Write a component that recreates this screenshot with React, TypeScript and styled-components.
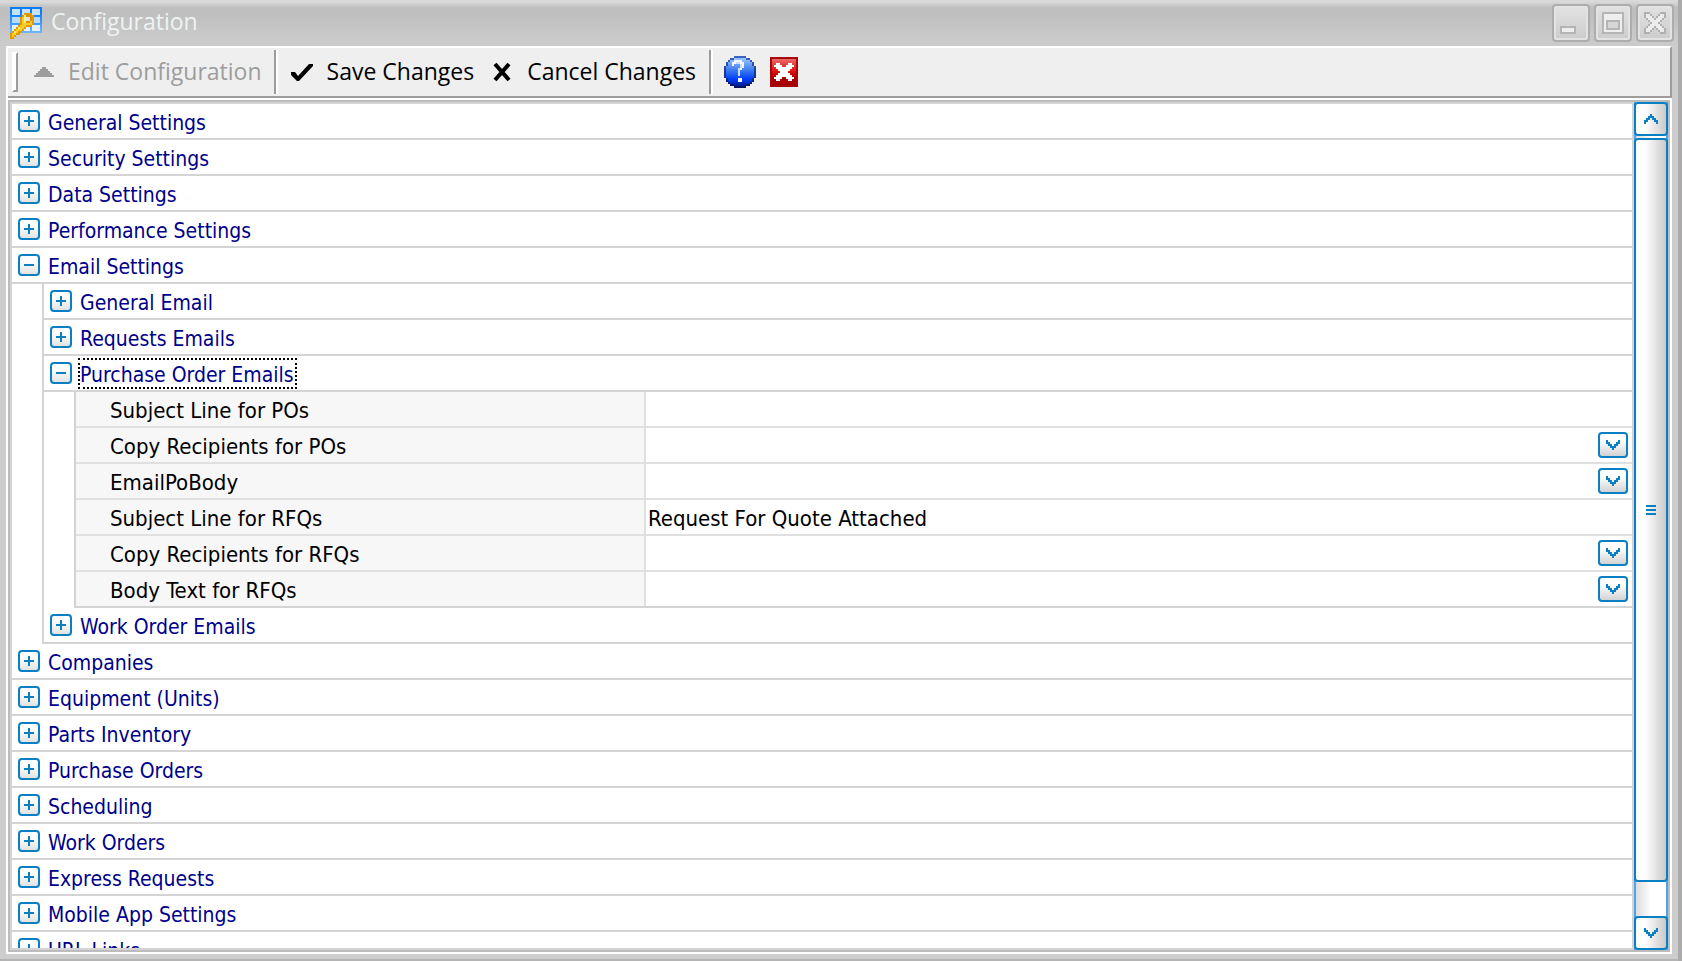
import React, { useState } from "react";
import styled, { createGlobalStyle, css } from "styled-components";

const ACCENT = "#0a7fc1";
const LINE = "#d4d4d4";
const TREE_FONT = `Tahoma, "DejaVu Sans Condensed", sans-serif`;
const UI_FONT = `"Segoe UI", "Open Sans", sans-serif`;

const GlobalStyle = createGlobalStyle`
  * { box-sizing: border-box; }
  body { margin: 0; overflow: hidden; }
  button, input { font: inherit; color: inherit; }
`;

const Window = styled.div`
  display: flex;
  flex-direction: column;
  height: 100vh;
  background: #cdcdcd;
  box-shadow: inset -4px 0 #ababab, inset 0 -2px #b4b4b4;
`;

const TitleBar = styled.header`
  display: flex;
  align-items: center;
  height: 46px;
  padding: 0 8px 0 10px;
  background: linear-gradient(#d9d9d9 0 2px, #cfcfcf 4px, #bfbfbf 8px 16px, #c9c9c9 36px, #cbcbcb);
  box-shadow: inset -4px 0 #ababab;
  font-family: ${UI_FONT};
`;

const Title = styled.h1`
  flex: 1;
  margin: 0;
  padding: 0 0 4px 9px;
  font-size: 23px;
  font-weight: 400;
  line-height: 30px;
  color: #eef3f3;
`;

const WindowButtons = styled.div`
  display: flex;
  gap: 4px;
`;

const WindowButton = styled.button`
  width: 38px;
  height: 38px;
  padding: 0;
  border: 2px solid #adadad;
  border-radius: 4px;
  background: linear-gradient(#e2e2e2, #cccccc);
  box-shadow: inset 0 0 0 2px #e3e3e3;
  svg { display: block; }
`;

const Body = styled.div`
  display: flex;
  flex: 1;
  flex-direction: column;
  min-height: 0;
  margin: 0 10px 7px 6px;
  border-left: 2px solid #fff;
  background: #fff;
`;

const Toolbar = styled.div`
  display: flex;
  align-items: center;
  height: 52px;
  padding: 0 4px;
  border: 2px solid #9d9d9d;
  border-top-color: #fff;
  border-left: 0;
  background: #efefef;
  font-family: ${UI_FONT};
  font-size: 23px;
  line-height: 30px;
`;

const Grip = styled.span`
  width: 6px;
  height: 40px;
  border: 2px solid #9d9d9d;
  border-top-color: #fff;
  border-left-color: #fff;
  background: #fff;
`;

const Separator = styled.span`
  width: 4px;
  height: 44px;
  background: linear-gradient(90deg, #9d9d9d 50%, #fff 50%);
`;

const ToolButton = styled.button<{ $pad?: string }>`
  display: flex;
  align-items: center;
  gap: 14px;
  height: 44px;
  padding: ${(p) => p.$pad ?? "0 13px"};
  border: 0;
  background: none;
  white-space: nowrap;
  color: #000;
  &:disabled { color: #9d9d9d; }
  svg { flex: none; }
`;

const ToolText = styled.span`
  padding-bottom: 2px;
`;

const Panel = styled.main`
  display: flex;
  flex: 1;
  min-height: 0;
  margin: 2px 2px 2px 0;
  border: 2px solid #bcbcbc;
`;

const Tree = styled.ul`
  flex: 1;
  min-width: 0;
  margin: 0;
  padding: 0;
  overflow: hidden;
  border: 2px solid ${LINE};
  list-style: none;
  font-family: ${TREE_FONT};
  font-size: 22px;
  line-height: 28px;
`;

const Branch = styled.ul`
  margin: 0;
  padding: 0 0 0 30px;
  list-style: none;
`;

const Item = styled.li<{ $nested?: boolean }>`
  ${(p) => p.$nested && css`border-left: 2px solid ${LINE};`}
`;

const GroupRow = styled.div`
  display: flex;
  align-items: center;
  gap: 7px;
  height: 36px;
  padding-left: 6px;
  border-bottom: 2px solid ${LINE};
`;

const Toggle = styled.button`
  width: 22px;
  height: 22px;
  padding: 0;
  border: 2px solid ${ACCENT};
  border-radius: 4px;
  background: linear-gradient(#fff 30%, #e2e2e2);
  svg { display: block; }
`;

const GroupLabel = styled.span<{ $focused?: boolean }>`
  padding: 3px 2px 0 1px;
  font-size: 21px;
  line-height: 26px;
  color: #00008b;
  ${(p) => p.$focused && css`outline: 2px dotted #000; outline-offset: -1px;`}
`;

const Properties = styled.div`
  margin-left: 30px;
  border-left: 2px solid ${LINE};
`;

const Property = styled.div<{ $last?: boolean }>`
  display: grid;
  grid-template-columns: minmax(200px, 568px) minmax(0, 1fr);
  height: 36px;
  border-bottom: 2px solid ${(p) => (p.$last ? LINE : "#e0e0e0")};
`;

const PropertyLabel = styled.label`
  padding: 5px 0 1px 34px;
  background: #f7f7f7;
  white-space: nowrap;
  color: #000;
`;

const PropertyValue = styled.div`
  display: flex;
  align-items: center;
  padding-right: 4px;
  border-left: 2px solid #e0e0e0;
`;

const ValueInput = styled.input`
  flex: 1;
  min-width: 0;
  height: 34px;
  padding: 2px 2px 0;
  border: 0;
  outline: 0;
  background: transparent;
`;

const DropButton = styled.button`
  width: 30px;
  height: 26px;
  padding: 0;
  border: 2px solid ${ACCENT};
  border-radius: 4px;
  background: linear-gradient(#fff 30%, #d2d2d2);
  svg { display: block; margin: 0 auto; }
`;

const ScrollBar = styled.div`
  display: flex;
  flex-direction: column;
  width: 34px;
  background: linear-gradient(90deg, #d8d8d8, #fff 50%);
  box-shadow: inset 2px 0 #4fa3ea, inset -2px 0 #4fa3ea;
`;

const scrollPart = css`
  padding: 0;
  border: 2px solid ${ACCENT};
  border-radius: 4px;
  background: linear-gradient(90deg, #fff 30%, #e4e4e4 65%, #c9c9c9);
`;

const ScrollButton = styled.button`
  ${scrollPart}
  height: 34px;
  svg { display: block; margin: 0 auto; }
`;

const ScrollTrack = styled.div`
  flex: 1;
  padding-top: 2px;
`;

const ScrollThumb = styled.div`
  ${scrollPart}
  display: flex;
  align-items: center;
  justify-content: center;
  height: 95.6%;
`;

const Pixels = ({ width, height, children }: { width: number; height: number; children: React.ReactNode }) => (
  <svg width={width} height={height} viewBox={`0 0 ${width / 2} ${height / 2}`} shapeRendering="crispEdges" aria-hidden="true">
    {children}
  </svg>
);

const AppIcon = () => (
  <Pixels width={32} height={32}>
    <defs>
      <linearGradient id="grid" x1="0" y1="0" x2="0" y2="1">
        <stop offset=".2" stopColor="#0a7cf8" />
        <stop offset="1" stopColor="#6fb6ff" />
      </linearGradient>
    </defs>
    <path d="M0 0h16v13H0z" fill="url(#grid)" />
    <path d="M1 1h4v3H1zM6 1h4v3H6zM11 1h4v3h-4z" fill="#c4e2ff" />
    <path d="M1 5h4v3H1zM6 5h4v3H6zM11 5h4v3h-4z" fill="#b6dcff" />
    <path d="M1 9h4v3H1zM6 9h4v3H6zM11 9h4v3h-4z" fill="#e4f2ff" />
    <path d="M7 3h4v1h1v5h-1v1H8v1H7v1H6v1H5v1H3v1H2v1H0v-3h1v-1h1v-1h1v-1h1V9h1V5h1V4h1z" fill="#e09a00" />
    <path d="M7 4h3v1h1v4H8v1H7v1H6v1H4v1H3v1H2v1H1v-2h1v-1h1v-1h1v-1h1V9h1V5h1z" fill="#ffcc22" />
    <path d="M7 4h1v4H7zM2 12h1v1H2zM4 10h1v1H4z" fill="#fff08a" />
    <path d="M8 4h2v1h1v2h-1v1H8z" fill="#e08a00" />
    <path d="M8 5h2v2H8z" fill="#dfe6e0" />
  </Pixels>
);

const Chevron = ({ up }: { up?: boolean }) => (
  <Pixels width={14} height={10}>
    <path
      d="M0 0h1v1h1v1h1v1h1V2h1V1h1V0h1v2H6v1H5v1H4v1H3V4H2V3H1V2H0z"
      transform={up ? "matrix(1 0 0 -1 0 5)" : undefined}
      fill={ACCENT}
    />
  </Pixels>
);

const ToggleMark = ({ open }: { open?: boolean }) => (
  <Pixels width={18} height={18}>
    <path d={open ? "M2 4h5v1H2z" : "M2 4h2V2h1v2h2v1H5v2H4V5H2z"} fill={ACCENT} />
  </Pixels>
);

const HelpIcon = () => (
  <Pixels width={32} height={32}>
    <defs>
      <linearGradient id="help" x1="0" y1="0" x2="0" y2="1">
        <stop offset="0" stopColor="#9cc8ff" />
        <stop offset=".45" stopColor="#3a78ee" />
        <stop offset=".75" stopColor="#0040ff" />
        <stop offset="1" stopColor="#001a90" />
      </linearGradient>
      <linearGradient id="helpRim" x1="0" y1="0" x2="0" y2="1">
        <stop offset="0" stopColor="#3a66c8" />
        <stop offset="1" stopColor="#00105c" />
      </linearGradient>
    </defs>
    <path d="M5 0h6v1h2v1h1v1h1v2h1v6h-1v2h-1v1h-1v1h-2v1H5v-1H3v-1H2v-1H1v-2H0V5h1V3h1V2h1V1h2z" fill="url(#helpRim)" />
    <path d="M5 1h6v1h2v1h1v2h1v6h-1v2h-1v1h-2v1H5v-1H3v-1H2v-2H1V5h1V3h1V2h2z" fill="url(#help)" />
    <path d="M5 2h4v1h1v3H9v1H8v3H7V6h1V5h1V4H8V3H6v1H5v1H4V3h1zM7 11h2v2H7z" fill="#f2f6ff" />
    <path d="M6 3h2v1H6zM8 4h1v2H8zM7 6h1v4H7z" fill="#c8dcff" />
  </Pixels>
);

const ExitIcon = () => (
  <Pixels width={28} height={30}>
    <defs>
      <linearGradient id="exit" x1="0" y1="0" x2="0" y2="1">
        <stop offset="0" stopColor="#e86a6a" />
        <stop offset=".45" stopColor="#e01414" />
        <stop offset=".7" stopColor="#b00000" />
        <stop offset="1" stopColor="#a00000" />
      </linearGradient>
    </defs>
    <path d="M0 0h14v15H0z" fill="#a80808" />
    <path d="M1 1h12v13H1z" fill="url(#exit)" />
    <path d="M3 3h2v1h1v1h2V4h1V3h2v1h1v1h-1v1h-1v1H9v1h1v1h1v1h1v1h-1v1H9v-1H8v-1H6v1H5v1H3v-1H2v-1h1V9h1V8h1V7H4V6H3V5H2V4h1z" fill="#fff" />
  </Pixels>
);

type PropertyDef = { name: string; value?: string; drop?: boolean };
type Group = { name: string; open?: boolean; focused?: boolean; children?: Group[]; properties?: PropertyDef[] };

const groups: Group[] = [
  { name: "General Settings" },
  { name: "Security Settings" },
  { name: "Data Settings" },
  { name: "Performance Settings" },
  {
    name: "Email Settings",
    open: true,
    children: [
      { name: "General Email" },
      { name: "Requests Emails" },
      {
        name: "Purchase Order Emails",
        open: true,
        focused: true,
        properties: [
          { name: "Subject Line for POs" },
          { name: "Copy Recipients for POs", drop: true },
          { name: "EmailPoBody", drop: true },
          { name: "Subject Line for RFQs", value: "Request For Quote Attached" },
          { name: "Copy Recipients for RFQs", drop: true },
          { name: "Body Text for RFQs", drop: true },
        ],
      },
      { name: "Work Order Emails" },
    ],
  },
  { name: "Companies" },
  { name: "Equipment (Units)" },
  { name: "Parts Inventory" },
  { name: "Purchase Orders" },
  { name: "Scheduling" },
  { name: "Work Orders" },
  { name: "Express Requests" },
  { name: "Mobile App Settings" },
  { name: "URL Links" },
];

const PropertyRow = ({ item, last }: { item: PropertyDef; last: boolean }) => {
  const id = item.name.replace(/\s/g, "-");
  return (
    <Property $last={last}>
      <PropertyLabel htmlFor={id}>{item.name}</PropertyLabel>
      <PropertyValue>
        <ValueInput id={id} defaultValue={item.value} />
        {item.drop && (
          <DropButton aria-label={`Open ${item.name}`}>
            <Chevron />
          </DropButton>
        )}
      </PropertyValue>
    </Property>
  );
};

const GroupItem = ({ group, nested }: { group: Group; nested?: boolean }) => {
  const [open, setOpen] = useState(!!group.open);
  const { children, properties } = group;
  return (
    <Item $nested={nested}>
      <GroupRow>
        <Toggle aria-expanded={open} aria-label={group.name} onClick={() => setOpen(!open)}>
          <ToggleMark open={open} />
        </Toggle>
        <GroupLabel $focused={group.focused}>{group.name}</GroupLabel>
      </GroupRow>
      {open && children && (
        <Branch>
          {children.map((child) => <GroupItem key={child.name} group={child} nested />)}
        </Branch>
      )}
      {open && properties && (
        <Properties>
          {properties.map((item, i) => (
            <PropertyRow key={item.name} item={item} last={i === properties.length - 1} />
          ))}
        </Properties>
      )}
    </Item>
  );
};

export default function App() {
  return (
    <Window>
      <GlobalStyle />
      <TitleBar>
        <AppIcon />
        <Title>Configuration</Title>
        <WindowButtons>
          <WindowButton aria-label="Minimize">
            <Pixels width={34} height={34}>
              <path d="M3 10h8v4H3z" fill="#b5b5b5" />
              <path d="M4 11h6v2H4z" fill="#eeeeee" />
            </Pixels>
          </WindowButton>
          <WindowButton aria-label="Maximize">
            <Pixels width={34} height={34}>
              <path d="M3 3h11v11H3z" fill="#b5b5b5" />
              <path d="M4 4h9v9H4z" fill="#eeeeee" />
              <path d="M5 7h7v5H5z" fill="#b5b5b5" />
              <path d="M6 8h5v3H6z" fill="#d6d6d6" />
            </Pixels>
          </WindowButton>
          <WindowButton aria-label="Close">
            <Pixels width={34} height={34}>
              <path d="M3 3h3v1h1v1h1v1h1V5h1V4h1V3h3v3h-1v1h-1v1h-1v1h1v1h1v1h1v3h-3v-1h-1v-1H9v-1H8v1H7v1H6v1H3v-3h1v-1h1V9h1V8H5V7H4V6H3z" fill="#b0b0b0" />
              <path d="M4 4h2v1h1v1h1v1h1V6h1V5h1V4h2v2h-1v1h-1v1h-1v1h1v1h1v1h1v2h-2v-1h-1v-1H9v-1H8v1H7v1H6v1H4v-2h1v-1h1V9h1V8H6V7H5V6H4z" fill="#ececec" />
            </Pixels>
          </WindowButton>
        </WindowButtons>
      </TitleBar>
      <Body>
        <Toolbar role="toolbar">
          <Grip />
          <ToolButton disabled $pad="0 12px 0 16px">
            <Pixels width={20} height={10}>
              <path d="M4 0h2v1h1v1h1v1h1v1h1v1H0V4h1V3h1V2h1V1h1z" fill="#9d9d9d" />
            </Pixels>
            <ToolText>Edit Configuration</ToolText>
          </ToolButton>
          <Separator />
          <ToolButton>
            <svg width="22" height="20" viewBox="0 0 22 20" aria-hidden="true">
              <path d="M0 10h4l3 4L18 2h4v2L8 19H6L0 13z" />
            </svg>
            <ToolText>Save Changes</ToolText>
          </ToolButton>
          <ToolButton $pad="0 13px 0 6px">
            <svg width="20" height="20" viewBox="0 0 20 20" aria-hidden="true">
              <path d="M2 2l14 16M16 2L2 18" stroke="#000" strokeWidth="4" />
            </svg>
            <ToolText>Cancel Changes</ToolText>
          </ToolButton>
          <Separator />
          <ToolButton $pad="0 7px 0 11px" aria-label="Help"><HelpIcon /></ToolButton>
          <ToolButton $pad="0 7px" aria-label="Exit"><ExitIcon /></ToolButton>
        </Toolbar>
        <Panel>
          <Tree>
            {groups.map((group) => <GroupItem key={group.name} group={group} />)}
          </Tree>
          <ScrollBar>
            <ScrollButton aria-label="Scroll up"><Chevron up /></ScrollButton>
            <ScrollTrack>
              <ScrollThumb>
                <Pixels width={10} height={10}>
                  <path d="M0 0h5v1H0zM0 2h5v1H0zM0 4h5v1H0z" fill={ACCENT} />
                </Pixels>
              </ScrollThumb>
            </ScrollTrack>
            <ScrollButton aria-label="Scroll down"><Chevron /></ScrollButton>
          </ScrollBar>
        </Panel>
      </Body>
    </Window>
  );
}
